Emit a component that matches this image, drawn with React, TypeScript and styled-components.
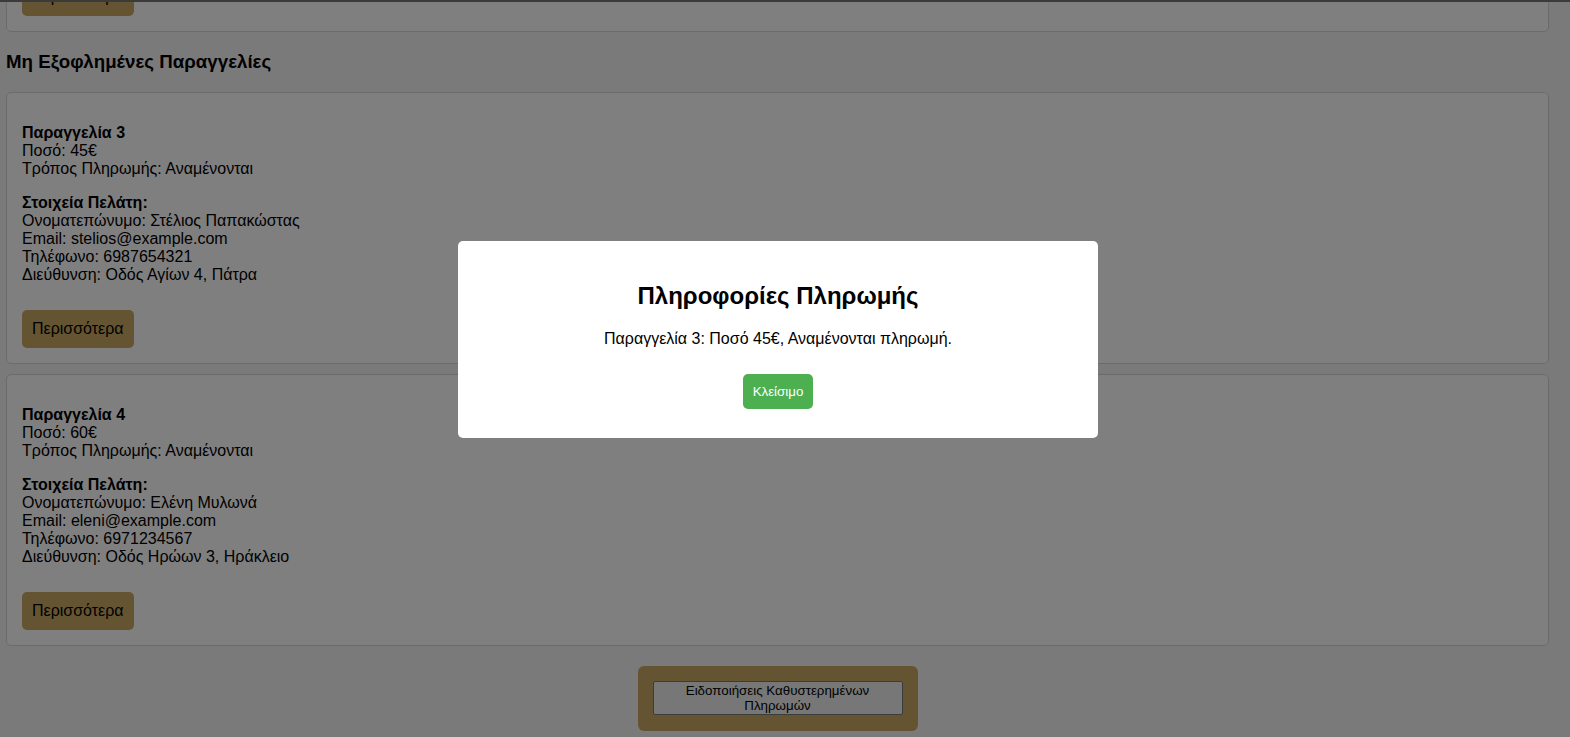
import React, { useLayoutEffect, useRef } from "react";
import styled, { createGlobalStyle } from "styled-components";

const GlobalStyle = createGlobalStyle`
  html { scrollbar-width: none; background: #f5f5f5; }
  html::-webkit-scrollbar { display: none; }
  body {
    margin: 0;
    background: #f5f5f5;
    font-family: "Liberation Sans", Arial, sans-serif;
    font-size: 16px;
    color: #000;
  }
`;

const Page = styled.div`
  width: 1555px;
  box-sizing: border-box;
  padding: 0 6px 40px;
`;

const SectionTitle = styled.h3`
  font-size: 18.72px;
  font-weight: bold;
  margin: 18.72px 0;
`;

const Card = styled.div`
  background: #fff;
  border: 1px solid #d6d6d6;
  border-radius: 5px;
  padding: 15px;
  margin-bottom: 10px;
`;

const Info = styled.p`
  margin: 16px 0;
`;

const Actions = styled.div`
  display: flex;
  padding-top: 10px;
`;

const MoreButton = styled.button`
  background: #caa962;
  color: #000;
  border: none;
  border-radius: 5px;
  padding: 10px;
  font-family: "Liberation Sans", Arial, sans-serif;
  font-size: 16px;
  line-height: 18px;
  cursor: pointer;
`;

const Footer = styled.div`
  display: flex;
  justify-content: center;
  margin-top: 20px;
`;

const NoticeBox = styled.div`
  background: #caa962;
  border-radius: 6px;
  padding: 15px 15px 16px;
`;

const NoticeButton = styled.button`
  width: 250px;
  box-sizing: border-box;
  background: #efefef;
  border: 1px solid #767676;
  border-radius: 2px;
  padding: 1px 6px;
  font-family: "Liberation Sans", Arial, sans-serif;
  font-size: 13.33px;
  line-height: 15px;
  color: #000;
  display: block;
`;

const Overlay = styled.div`
  position: fixed;
  inset: 0;
  background: rgba(0, 0, 0, 0.5);
  border-top: 2px solid #3b3b3b;
  display: flex;
  justify-content: center;
  align-items: flex-start;
  padding: 239px 14px 0 0;
  box-sizing: border-box;
`;

const Modal = styled.div`
  width: 640px;
  box-sizing: border-box;
  background: #fff;
  border-radius: 5px;
  padding: 21px 20px 20px;
  text-align: center;
`;

const ModalTitle = styled.h2`
  font-size: 24px;
  font-weight: bold;
  margin: 20px 0;
`;

const ModalText = styled.p`
  margin: 16px 0 0;
`;

const CloseButton = styled.button`
  margin: 26px 0 9px;
  background: #4caf50;
  color: #fff;
  border: none;
  border-radius: 5px;
  padding: 10px;
  font-family: "Liberation Sans", Arial, sans-serif;
  font-size: 13.33px;
  line-height: 15px;
  cursor: pointer;
`;

type Order = {
  id: number;
  amount: string;
  method: string;
  name: string;
  email: string;
  phone: string;
  address: string;
};

const paid: Order[] = [
  { id: 1, amount: "30€", method: "Κάρτα", name: "Γιάννης Παπαδόπουλος", email: "giannis@example.com", phone: "6912345678", address: "Οδός Ερμού 10, Αθήνα" },
  { id: 2, amount: "50€", method: "Μετρητά", name: "Μαρία Νικολάου", email: "maria@example.com", phone: "6945678912", address: "Οδός Τσιμισκή 22, Θεσσαλονίκη" },
];

const unpaid: Order[] = [
  { id: 3, amount: "45€", method: "Αναμένονται", name: "Στέλιος Παπακώστας", email: "stelios@example.com", phone: "6987654321", address: "Οδός Αγίων 4, Πάτρα" },
  { id: 4, amount: "60€", method: "Αναμένονται", name: "Ελένη Μυλωνά", email: "eleni@example.com", phone: "6971234567", address: "Οδός Ηρώων 3, Ηράκλειο" },
];

const OrderCard: React.FC<{ order: Order }> = ({ order }) => (
  <Card>
    <Info>
      <strong>Παραγγελία {order.id}</strong>
      <br />
      Ποσό: {order.amount}
      <br />
      Τρόπος Πληρωμής: {order.method}
    </Info>
    <Info>
      <strong>Στοιχεία Πελάτη:</strong>
      <br />
      Ονοματεπώνυμο: {order.name}
      <br />
      Email: {order.email}
      <br />
      Τηλέφωνο: {order.phone}
      <br />
      Διεύθυνση: {order.address}
    </Info>
    <Actions>
      <MoreButton>Περισσότερα</MoreButton>
    </Actions>
  </Card>
);

export default function App() {
  const headingRef = useRef<HTMLHeadingElement>(null);

  useLayoutEffect(() => {
    const el = headingRef.current;
    if (el) {
      const top = el.getBoundingClientRect().top + window.scrollY;
      window.scrollTo(0, top - 51);
    }
  }, []);

  return (
    <>
      <GlobalStyle />
      <Page>
        <SectionTitle>Εξοφλημένες Παραγγελίες</SectionTitle>
        {paid.map((o) => (
          <OrderCard key={o.id} order={o} />
        ))}
        <SectionTitle ref={headingRef}>Μη Εξοφλημένες Παραγγελίες</SectionTitle>
        {unpaid.map((o) => (
          <OrderCard key={o.id} order={o} />
        ))}
        <Footer>
          <NoticeBox>
            <NoticeButton>Ειδοποιήσεις Καθυστερημένων Πληρωμών</NoticeButton>
          </NoticeBox>
        </Footer>
      </Page>
      <Overlay>
        <Modal>
          <ModalTitle>Πληροφορίες Πληρωμής</ModalTitle>
          <ModalText>Παραγγελία 3: Ποσό 45€, Αναμένονται πληρωμή.</ModalText>
          <CloseButton>Κλείσιμο</CloseButton>
        </Modal>
      </Overlay>
    </>
  );
}
